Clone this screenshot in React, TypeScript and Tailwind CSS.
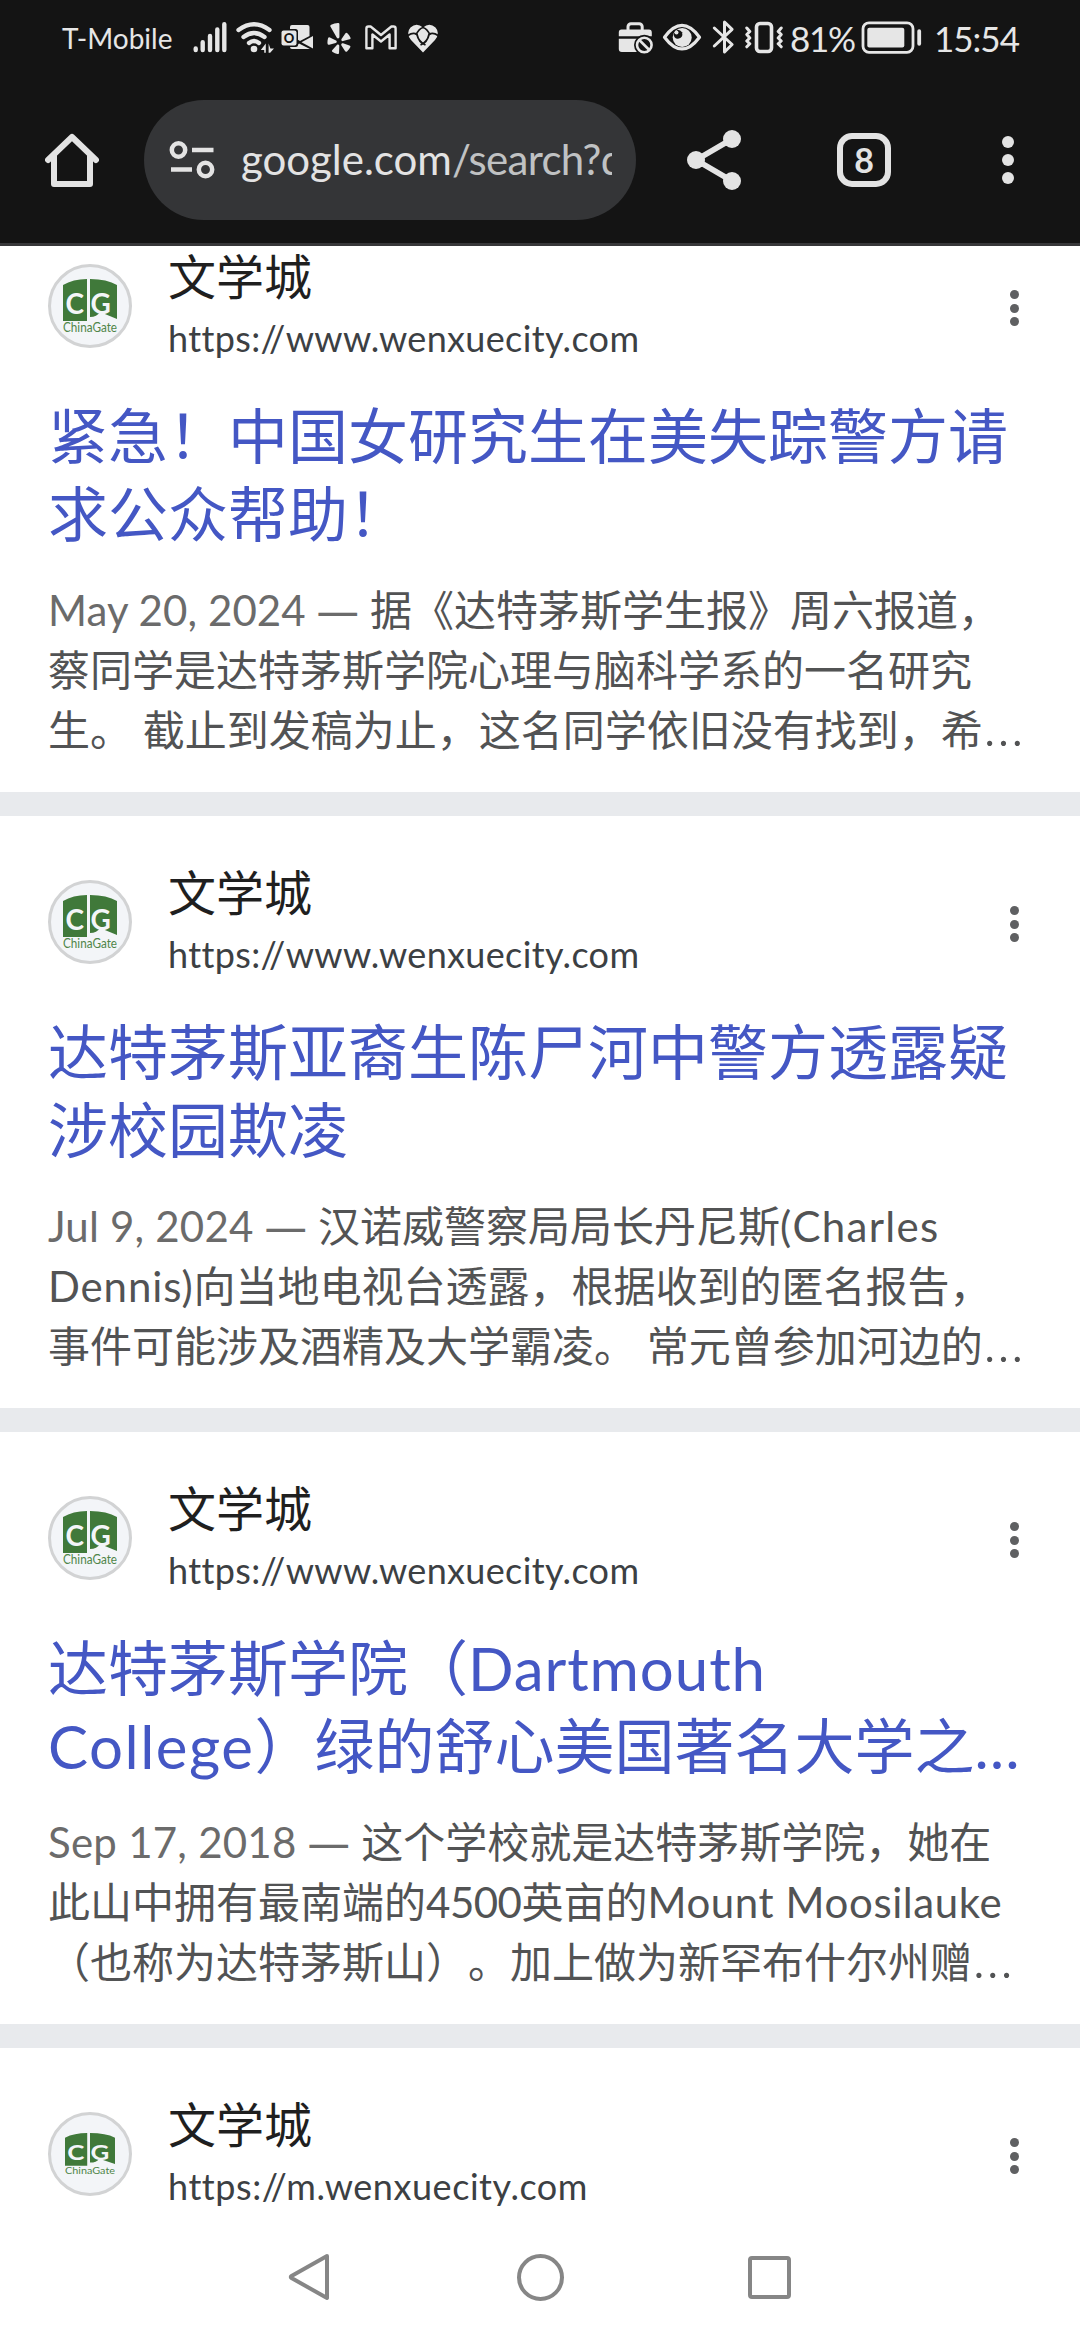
import type { ReactNode } from "react";
import { clsx } from "clsx";
import { FaYelp } from "react-icons/fa";

interface Result {
  id: string;
  url: ReactNode;
  smallLogo?: boolean;
  title?: ReactNode[];
  snippet?: ReactNode[];
}

const Dash = () => <span className="font-['Noto_Sans']"> — </span>;

const More = () => (
  <span className="font-['Inter'] text-[49px] leading-none font-light">…</span>
);

const results: Result[] = [
  {
    id: "missing",
    url: <span className="tracking-[0.35px]">https://www.wenxuecity.com</span>,
    title: ["紧急！中国女研究生在美失踪警方请", "求公众帮助！"],
    snippet: [
      <>
        <span className="tracking-[0.1px] text-[#6b6b6b]">
          May 20, 2024
          <Dash />
        </span>
        据《达特茅斯学生报》周六报道，
      </>,
      "蔡同学是达特茅斯学院心理与脑科学系的一名研究",
      <>
        生。 截止到发稿为止，这名同学依旧没有找到，希
        <More />
      </>,
    ],
  },
  {
    id: "river",
    url: <span className="tracking-[0.35px]">https://www.wenxuecity.com</span>,
    title: ["达特茅斯亚裔生陈尸河中警方透露疑", "涉校园欺凌"],
    snippet: [
      <>
        <span className="tracking-[0.2px] text-[#6b6b6b]">
          Jul 9, 2024
          <Dash />
        </span>
        汉诺威警察局局长丹尼斯
        <span className="tracking-[1.3px]">(Charles</span>
      </>,
      <>
        <span className="tracking-[0.9px]">Dennis)</span>
        向当地电视台透露，根据收到的匿名报告，
      </>,
      <>
        事件可能涉及酒精及大学霸凌。 常元曾参加河边的
        <More />
      </>,
    ],
  },
  {
    id: "college",
    url: <span className="tracking-[0.35px]">https://www.wenxuecity.com</span>,
    title: [
      <>
        达特茅斯学院（<span className="tracking-[0.9px]">Dartmouth</span>
      </>,
      <>
        <span className="tracking-[1.5px]">College</span>
        ）绿的舒心美国著名大学之…
      </>,
    ],
    snippet: [
      <>
        <span className="tracking-[0.25px] text-[#6b6b6b]">
          Sep 17, 2018
          <Dash />
        </span>
        这个学校就是达特茅斯学院，她在
      </>,
      <>
        此山中拥有最南端的<span className="tracking-[-0.5px]">4500</span>
        英亩的<span className="tracking-[0.6px]">Mount Moosilauke</span>
      </>,
      <>
        （也称为达特茅斯山）。加上做为新罕布什尔州赠
        <More />
      </>,
    ],
  },
  {
    id: "mobile",
    url: <span className="tracking-[0.55px]">https://m.wenxuecity.com</span>,
    smallLogo: true,
  },
];

function StatusBar() {
  return (
    <div className="flex h-[76px] items-center pl-[62px] text-[#e6e6e6]">
      <span className="w-32 text-[28px]">T-Mobile</span>

      {/* signal */}
      <svg viewBox="190 18 42 40" className="h-10 w-[42px]" stroke="currentColor" strokeWidth="4.4" strokeLinecap="round">
        <path d="M195.7 48.5V50M202.7 42.3V50M210 36V50M217.3 29.5V50M224.3 24.3V50" />
      </svg>

      {/* wifi */}
      <svg viewBox="232 18 46 40" className="h-10 w-[46px]" fill="none" stroke="currentColor" strokeWidth="4.3" strokeLinecap="round">
        <path d="M238.5 30Q254 18.5 269.5 30M243.5 37Q254 29 264.5 37M249 43Q254 39 259 43" />
        <circle cx="254" cy="49" r="3.3" fill="currentColor" stroke="none" />
        <path d="M265.8 43.5v9.3h-1.6v-2.8h-3.4zM268.6 43.5v9.3h1.6l3.8-4.4h-3.6z" fill="currentColor" stroke="none" />
      </svg>

      {/* outlook */}
      <svg viewBox="278 18 44 40" className="h-10 w-11" fill="currentColor">
        <path d="M292 25h15.500q2 0 2 2v9l-9.500 5-10-6V27q0-2 2-2z" />
        <path d="M313 36v12.500l-11.500-6.300zM290 46h7l2-2.500 11 5.500h-18q-2 0-2-2z" />
        <rect x="280" y="29" width="18" height="18" rx="2.500" fill="#141414" />
        <rect x="281.500" y="30.500" width="15" height="15" rx="2" />
        <text x="289" y="42.800" fontSize="13" fontWeight="900" textAnchor="middle" fill="#141414">
          O
        </text>
      </svg>

      <span className="flex w-9 pl-[5px]">
        <FaYelp className="h-[31px] w-6" />
      </span>

      {/* gmail */}
      <svg viewBox="358 18 44 40" className="h-10 w-11" fill="none" stroke="currentColor" strokeWidth="2.4" strokeLinejoin="round">
        <path d="M366.400 48.200V28.500q0-2 2-2h2.200L381 35l10.400-8.500h2.200q2 0 2 2v19.700h-6V34.500L381 41.500l-8.600-7v13.700z" />
      </svg>

      {/* heart */}
      <svg viewBox="402 18 44 40" className="h-10 w-11" fill="currentColor">
        <path d="M423 52.500 411 40q-5.500-7-.5-12.500 6-5.500 12.500 0 6.500-5.500 12.500 0 5 5.500-.5 12.500z" />
        <g fill="none" stroke="#141414" strokeWidth="1.800">
          <path d="M408 35.500q5-3.500 9-1 1.500 7.500 8.500 10.500M438 35.500q-5-3.500-9-1-1.500 7.500-8.500 10.500" />
          <path d="M416 35q3-6.500 7-7.500 4 1 7 7.500M423 24v4" />
        </g>
      </svg>

      <div className="ml-auto flex items-center">
        {/* work profile paused */}
        <svg viewBox="614 18 44 40" className="h-10 w-11" fill="currentColor">
          <rect x="628" y="23.800" width="14.200" height="10" rx="3" fill="none" stroke="currentColor" strokeWidth="3" />
          <path d="M621.500 29.500h27.500q2.800 0 2.800 3v3.700h-33v-3.700q0-3 2.700-3zM618.800 38.800h33v10.200q0 3-3 3h-27q-3 0-3-3z" />
          <circle cx="644.300" cy="45" r="10.300" fill="#141414" />
          <g fill="none" stroke="currentColor" strokeWidth="2.600">
            <circle cx="644.300" cy="45" r="7.300" />
            <path d="m639.300 40 10 10" />
          </g>
        </svg>

        {/* eye comfort */}
        <svg viewBox="658 18 48 40" className="h-10 w-12">
          <path d="M664.500 37.200q17.500-23.500 35 0-17.500 23.500-35 0z" fill="none" stroke="currentColor" strokeWidth="3.200" strokeLinejoin="round" />
          <circle cx="682.200" cy="37.500" r="9.500" fill="currentColor" />
          <path d="M673.500 34q.5 5 4.500 4.800 5.500-1 4-6.500-1.500-2.500-4.500-2.500z" fill="#141414" />
          <circle cx="676.500" cy="32.500" r="2" fill="currentColor" />
        </svg>

        {/* bluetooth */}
        <svg viewBox="706 18 34 40" className="h-10 w-[34px]" fill="none" stroke="currentColor" strokeWidth="3" strokeLinecap="round" strokeLinejoin="round">
          <path d="m714.300 28 17.800 16.500-7.600 7.500V22l7.600 7.300L714.300 46" />
        </svg>

        {/* vibrate */}
        <svg viewBox="740 18 50 40" className="h-10 w-[50px]" fill="none" stroke="currentColor" strokeWidth="3" strokeLinecap="round" strokeLinejoin="round">
          <rect x="756.500" y="23.500" width="15" height="28" rx="3.500" strokeWidth="3.600" />
          <path d="m746.800 28 3 3.500-3 3 3 3.500-3 3 3 2.800-3 3M781.200 28l-3 3.500 3 3-3 3.500 3 3-3 2.800 3 3" />
        </svg>

        <span className="w-[70px] text-[35px] tracking-[-1.3px]">81%</span>

        {/* battery */}
        <svg viewBox="860 18 66 40" className="h-10 w-[66px]" fill="currentColor">
          <rect x="863" y="22.800" width="50" height="29.500" rx="6" fill="none" stroke="currentColor" strokeWidth="2.800" />
          <rect x="867.300" y="27.800" width="37" height="19.600" rx="2" />
          <rect x="917.300" y="29.200" width="3.800" height="16.500" rx="1.900" />
        </svg>

        <span className="w-[154px] pl-2 text-[35px] tracking-[-1px]">15:54</span>
      </div>
    </div>
  );
}

function Toolbar() {
  return (
    <div className="flex h-[167px] items-center text-[#e3e3e3]">
      <svg viewBox="0 0 54 54" className="ml-[45px] h-[54px] w-[54px]" fill="none" stroke="currentColor" strokeWidth="6" strokeLinejoin="round" strokeLinecap="round">
        <path d="M3 27 27 4l24 23" />
        <path d="M9 23v28h36V23" />
      </svg>

      <div className="ml-[45px] flex h-[120px] w-[492px] items-center rounded-full bg-[#343537] pr-6 pl-[25px]">
        <svg viewBox="0 0 48 40" className="h-10 w-12 shrink-0" fill="none" stroke="currentColor" strokeWidth="4.500">
          <circle cx="9.500" cy="10" r="6.700" />
          <path d="M23 10h21.500M2 29.500h21" />
          <circle cx="36.500" cy="29.500" r="6.700" />
        </svg>
        <div className="ml-6 overflow-hidden text-[42px] whitespace-nowrap">
          <span>google.com</span>
          <span className="tracking-[-0.7px] text-[#c0c2c3]">/search?q=</span>
        </div>
      </div>

      <svg viewBox="0 0 54 60" className="ml-[51px] h-[60px] w-[54px]" fill="currentColor">
        <path d="M45 9 9 30l36 21" fill="none" stroke="currentColor" strokeWidth="5.500" />
        <circle cx="9" cy="30" r="9" />
        <circle cx="45" cy="9" r="9" />
        <circle cx="45" cy="51" r="9" />
      </svg>

      <div className="ml-24 flex h-[54px] w-[54px] items-center justify-center rounded-[15px] border-[6px] border-current text-[34px] leading-none font-bold">
        8
      </div>

      <div className="ml-[111px] flex flex-col gap-1.5">
        <i className="size-3 rounded-full bg-current" />
        <i className="size-3 rounded-full bg-current" />
        <i className="size-3 rounded-full bg-current" />
      </div>
    </div>
  );
}

function Logo({ small }: { small?: boolean }) {
  return (
    <div className="mt-[11px] flex size-[84px] shrink-0 items-center justify-center rounded-full border-[3px] border-[#d2d3d4] bg-[#f3f5f8]">
      <svg
        viewBox="0 0 54 54"
        preserveAspectRatio="none"
        className={clsx(small ? "h-[42px] w-[50px]" : "h-[54px] w-[54px]")}
      >
        <path d="M0 6Q10 0 24 0v42H0zM27 0Q44 0 54 6v36H27z" fill="#40793a" />
        <path d="m37 33 17 7v3H27v-5q7 0 10-5z" fill="#f3f5f8" />
        <g fill="#f3f5f8" fontSize="28" fontWeight="700">
          <text x="2.500" y="35">C</text>
          <text x="27.500" y="35">G</text>
        </g>
        <text x="0" y="53" fontSize="12.500" fill="#4f8549" textLength="54" lengthAdjust="spacingAndGlyphs">
          ChinaGate
        </text>
      </svg>
    </div>
  );
}

function ResultCard({ url, smallLogo, title, snippet }: Result) {
  return (
    <article className="h-[616px] shrink-0 border-b-[24px] border-[#e8eaed] bg-white px-12 pt-[53px]">
      <div className="flex h-36">
        <Logo small={smallLogo} />
        <div className="ml-9 flex flex-col gap-[13px]">
          <span className="h-12 text-[48px] leading-[48px] text-[#1f1f1f]">文学城</span>
          <span className="h-12 text-[36px] leading-[48px] text-[#3c4043]">{url}</span>
        </div>
        <div className="mt-[37px] mr-[13px] ml-auto flex flex-col gap-[4.5px]">
          <i className="size-[9px] rounded-full bg-[#5f6062]" />
          <i className="size-[9px] rounded-full bg-[#5f6062]" />
          <i className="size-[9px] rounded-full bg-[#5f6062]" />
        </div>
      </div>
      <h3 className="text-[60px] leading-[78px] whitespace-nowrap text-[#4457c4]">
        {title?.map((line, i) => (
          <span key={i} className="block h-[78px]">
            {line}
          </span>
        ))}
      </h3>
      <p className="mt-[27px] text-[42px] leading-[60px] whitespace-nowrap text-[#525354]">
        {snippet?.map((line, i) => (
          <span key={i} className="block h-[60px]">
            {line}
          </span>
        ))}
      </p>
    </article>
  );
}

function NavBar() {
  return (
    <nav className="relative flex h-[126px] items-center justify-between bg-white px-[286px] text-[#868686]">
      <svg viewBox="0 0 46 50" className="h-[50px] w-[46px]" fill="none" stroke="currentColor" strokeWidth="4" strokeLinejoin="round">
        <path d="M41 4 5.500 24q-1.500 1 0 2L41 46z" />
      </svg>
      <i className="size-[47px] rounded-full border-4 border-current" />
      <i className="mr-[3px] h-[43px] w-[43px] rounded-[4px] border-4 border-current" />
    </nav>
  );
}

export default function App() {
  return (
    <div
      lang="zh-CN"
      className="flex h-[2340px] w-[1080px] flex-col overflow-hidden bg-white font-['Lato','Noto_Sans_CJK_SC',sans-serif] [text-spacing-trim:space-all]"
    >
      <header className="relative z-10 shrink-0 border-b-[3px] border-[#38383a] bg-[#141414]">
        <StatusBar />
        <Toolbar />
      </header>
      {/* the first result is scrolled partly under the toolbar */}
      <main className="-mt-[46px] flex min-h-0 flex-1 flex-col overflow-hidden">
        {results.map((result) => (
          <ResultCard key={result.id} {...result} />
        ))}
      </main>
      <NavBar />
    </div>
  );
}
